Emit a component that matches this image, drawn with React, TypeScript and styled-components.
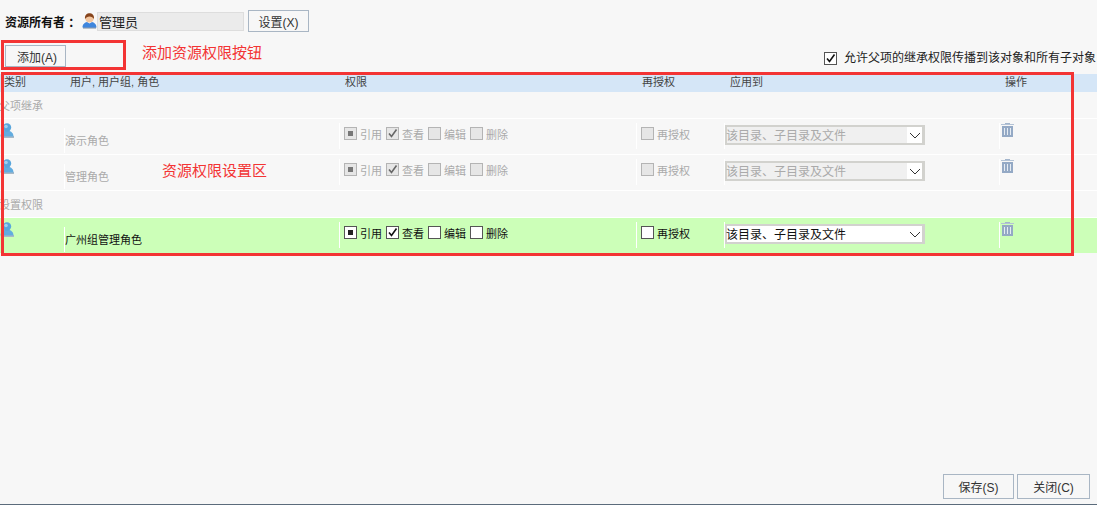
import React from 'react';
import styled, { createGlobalStyle } from 'styled-components';

const FONT = `"Liberation Sans", "Noto Sans CJK SC", sans-serif`;
const COLUMNS = '64px 275px 297px 88px 275px 1fr';

const GlobalStyle = createGlobalStyle`
  html, body {
    margin: 0;
    padding: 0;
    height: 100%;
    overflow: hidden;
    background: #f7f7f7;
  }
  #root {
    height: 100%;
  }
`;

const UserIcon = () => (
  <svg width="14" height="15" viewBox="0 0 14 15">
    <rect x="1" y="13" width="13" height="2" fill="#a9b9c6" />
    <path d="M0.5 13.5 C0.5 10 3 8.5 4.5 8 H9.5 C11 8.5 13.5 10 13.5 13.5 Z" fill="#62acdf" />
    <circle cx="7" cy="4.5" r="4.2" fill="#59a6dc" />
    <circle cx="6" cy="3.5" r="1.8" fill="#9ed0f0" />
  </svg>
);

const OwnerIcon = () => (
  <svg width="15" height="16" viewBox="0 0 15 16">
    <rect x="1" y="14" width="13" height="1.6" fill="#8e9cae" />
    <path d="M0.5 14.5 C0.5 11 3 9.5 5 9 L7.5 10.5 L10 9 C12 9.5 14.5 11 14.5 14.5 Z" fill="#3f86dd" />
    <circle cx="7.5" cy="5.2" r="4.3" fill="#f2c6a0" />
    <path d="M3 6 C2.5 1.5 5.5 0.3 7.5 0.3 C9.5 0.3 12.5 1.5 12 6 C11 4.2 9.5 3.4 7.5 3.4 C5.5 3.4 4 4.2 3 6 Z" fill="#86441c" />
  </svg>
);

const TrashIcon = () => (
  <svg width="13" height="14" viewBox="0 0 13 14">
    <rect x="4" y="0" width="5" height="1" fill="#a3b5cc" />
    <rect x="0" y="1" width="13" height="1" fill="#b4c3d6" />
    <rect x="1" y="3" width="11" height="11" fill="#94a9c5" />
    <rect x="3" y="5" width="1" height="7" fill="#e6ecf3" />
    <rect x="6" y="5" width="1" height="7" fill="#e6ecf3" />
    <rect x="9" y="5" width="1" height="7" fill="#e6ecf3" />
  </svg>
);

const Chevron = () => (
  <svg width="12" height="7" viewBox="0 0 12 7">
    <path d="M1 1 L6 6 L11 1" fill="none" stroke="#333" strokeWidth="1" />
  </svg>
);

const Page = styled.div`
  position: relative;
  height: 100%;
  box-sizing: border-box;
  display: flex;
  flex-direction: column;
  border-bottom: 1px solid #5b6b7b;
  font-family: ${FONT};
  font-size: 11px;
  color: #333;
`;

const OwnerBar = styled.div`
  display: flex;
  align-items: center;
  height: 22px;
  margin-top: 10px;
  padding-left: 5px;
`;

const OwnerLabel = styled.span`
  width: 77px;
  font-size: 12px;
  font-weight: bold;
  color: #111;
  white-space: pre;
`;

const OwnerField = styled.div`
  width: 147px;
  height: 19px;
  box-sizing: border-box;
  display: flex;
  align-items: center;
  margin: 0 4px 0 0;
  padding-left: 1px;
  background: #ebebeb;
  border: 1px solid #ddd;
  font-size: 13px;
  color: #222;
`;

const Button = styled.button<{ $width: number; $height?: number; $shift?: number }>`
  width: ${(p) => p.$width}px;
  height: ${(p) => p.$height ?? 22}px;
  box-sizing: border-box;
  padding: 0 0 0 ${(p) => p.$shift ?? 0}px;
  background: #f7f7f7;
  border: 1px solid #a9b6c4;
  font-family: ${FONT};
  font-size: 12px;
  color: #333;
`;

const ToolBar = styled.div`
  display: flex;
  align-items: flex-start;
  justify-content: space-between;
  height: 27px;
  margin-top: 13px;
  padding: 0 1px 0 5px;
`;

const InheritOption = styled.label`
  display: flex;
  align-items: center;
  gap: 7px;
  margin-top: 6px;
  font-size: 12px;
  line-height: 14px;
  color: #222;
  white-space: nowrap;
`;

const Header = styled.div`
  display: grid;
  grid-template-columns: ${COLUMNS};
  height: 18px;
  box-sizing: border-box;
  margin-top: 2px;
  padding-top: 2px;
  background: #d5e6f7;
  line-height: 12px;
  color: #444;
`;

const HeaderCell = styled.div<{ $pad: number }>`
  padding-left: ${(p) => p.$pad}px;
  white-space: nowrap;
`;

const GroupRow = styled.div`
  height: 27px;
  box-sizing: border-box;
  padding-top: 7px;
  margin-left: -1px;
  border-bottom: 1px solid #fff;
  color: #aaa;
  line-height: 14px;
`;

const Row = styled.div<{ $active?: boolean }>`
  display: grid;
  grid-template-columns: ${COLUMNS};
  height: ${(p) => (p.$active ? 35 : 36)}px;
  box-sizing: border-box;
  border-bottom: ${(p) => (p.$active ? 'none' : '1px solid #fff')};
  background: ${(p) => (p.$active ? '#ccffb8' : 'transparent')};
  color: ${(p) => (p.$active ? '#111' : '#aaa')};
`;

const IconCell = styled.div`
  padding-top: 4px;
`;

const NameCell = styled.div`
  height: 25px;
  box-sizing: border-box;
  margin-top: 9px;
  padding: 6px 0 0 0;
  border-left: 1px solid #fff;
  line-height: 14px;
  white-space: nowrap;
`;

const Cell = styled.div<{ $pad?: number }>`
  height: 26px;
  box-sizing: border-box;
  margin-top: 4px;
  padding-left: ${(p) => p.$pad ?? 4}px;
  border-left: 1px solid #fff;
  display: flex;
  align-items: flex-start;
`;

const Choice = styled.span`
  display: flex;
  align-items: center;
  height: 13px;
  margin: 4px 4px 0 0;
  gap: 3px;
  line-height: 15px;
  white-space: nowrap;
`;

const ChoiceText = styled.span`
  padding-top: 4px;
`;

const Box = styled.span<{ $enabled: boolean }>`
  width: 13px;
  height: 13px;
  box-sizing: border-box;
  display: inline-flex;
  align-items: center;
  justify-content: center;
  flex: none;
  border: 1px solid ${(p) => (p.$enabled ? '#555' : '#b4b4b4')};
  background: ${(p) => (p.$enabled ? '#fff' : '#e6e6e6')};
`;

const Square = styled.span<{ $enabled: boolean }>`
  width: 5px;
  height: 5px;
  background: ${(p) => (p.$enabled ? '#222' : '#777')};
`;

const Select = styled.div<{ $enabled: boolean }>`
  width: 200px;
  height: 20px;
  box-sizing: border-box;
  margin-top: 2px;
  border: 2px solid #d2d2ce;
  border-right-width: 3px;
  display: flex;
  align-items: center;
  justify-content: space-between;
  background: ${(p) => (p.$enabled ? '#fff' : '#f0f0f0')};
  font-size: 12px;
  color: ${(p) => (p.$enabled ? '#111' : '#aaa')};
  white-space: nowrap;
`;

const SelectText = styled.span`
  margin: -2px 0 0 -1px;
`;

const SelectArrow = styled.span`
  width: 15px;
  height: 100%;
  display: flex;
  align-items: center;
  justify-content: center;
  background: #fff;
`;

const ActionCell = styled.div`
  height: 26px;
  box-sizing: border-box;
  margin-top: 4px;
  padding-left: 1px;
  border-left: 1px solid #fff;
`;

const Footer = styled.div`
  display: flex;
  justify-content: flex-end;
  gap: 3px;
  margin-top: auto;
  padding: 0 7px 5px 0;
`;

const Highlight = styled.div<{ $x: number; $y: number; $w: number; $h: number }>`
  position: absolute;
  left: ${(p) => p.$x}px;
  top: ${(p) => p.$y}px;
  width: ${(p) => p.$w}px;
  height: ${(p) => p.$h}px;
  box-sizing: border-box;
  border: 3px solid #f33434;
  pointer-events: none;
`;

const Note = styled.span<{ $x: number; $y: number }>`
  position: absolute;
  left: ${(p) => p.$x}px;
  top: ${(p) => p.$y}px;
  font-size: 15px;
  line-height: 18px;
  color: #f33434;
  white-space: nowrap;
`;

type Perm = { label: string; mark?: 'check' | 'square' };

const PERMS: Perm[] = [
  { label: '引用', mark: 'square' },
  { label: '查看', mark: 'check' },
  { label: '编辑' },
  { label: '删除' },
];

const CheckBox: React.FC<{ enabled: boolean; mark?: 'check' | 'square' }> = ({ enabled, mark }) => (
  <Box $enabled={enabled}>
    {mark === 'square' && <Square $enabled={enabled} />}
    {mark === 'check' && (
      <svg width="11" height="11" viewBox="0 0 11 11">
        <path d="M2 5.5 L4.5 8.5 L9.5 1.5" fill="none" stroke={enabled ? '#111' : '#666'} strokeWidth="1.6" />
      </svg>
    )}
  </Box>
);

const PermissionRow: React.FC<{ name: string; active?: boolean }> = ({ name, active = false }) => (
  <Row $active={active}>
    <IconCell>
      <UserIcon />
    </IconCell>
    <NameCell>{name}</NameCell>
    <Cell>
      {PERMS.map((perm) => (
        <Choice key={perm.label}>
          <CheckBox enabled={active} mark={perm.mark} />
          <ChoiceText>{perm.label}</ChoiceText>
        </Choice>
      ))}
    </Cell>
    <Cell>
      <Choice>
        <CheckBox enabled={active} />
        <ChoiceText>再授权</ChoiceText>
      </Choice>
    </Cell>
    <Cell $pad={0}>
      <Select $enabled={active}>
        <SelectText>该目录、子目录及文件</SelectText>
        <SelectArrow>
          <Chevron />
        </SelectArrow>
      </Select>
    </Cell>
    <ActionCell>
      <TrashIcon />
    </ActionCell>
  </Row>
);

export default function App() {
  return (
    <Page>
      <GlobalStyle />
      <OwnerBar>
        <OwnerLabel>资源所有者 ：</OwnerLabel>
        <OwnerIcon />
        <OwnerField>管理员</OwnerField>
        <Button $width={61}>设置(X)</Button>
      </OwnerBar>
      <ToolBar>
        <Button $width={61} $shift={3}>添加(A)</Button>
        <InheritOption>
          <CheckBox enabled mark="check" />
          允许父项的继承权限传播到该对象和所有子对象
        </InheritOption>
      </ToolBar>
      <Header>
        <HeaderCell $pad={4}>类别</HeaderCell>
        <HeaderCell $pad={6}>用户, 用户组, 角色</HeaderCell>
        <HeaderCell $pad={6}>权限</HeaderCell>
        <HeaderCell $pad={6}>再授权</HeaderCell>
        <HeaderCell $pad={6}>应用到</HeaderCell>
        <HeaderCell $pad={6}>操作</HeaderCell>
      </Header>
      <GroupRow>父项继承</GroupRow>
      <PermissionRow name="演示角色" />
      <PermissionRow name="管理角色" />
      <GroupRow>设置权限</GroupRow>
      <PermissionRow name="广州组管理角色" active />
      <Footer>
        <Button $width={71} $height={25}>保存(S)</Button>
        <Button $width={73} $height={25}>关闭(C)</Button>
      </Footer>
      <Highlight $x={1} $y={40} $w={125} $h={30} />
      <Highlight $x={1} $y={72} $w={1073} $h={184} />
      <Note $x={142} $y={44}>添加资源权限按钮</Note>
      <Note $x={162} $y={162}>资源权限设置区</Note>
    </Page>
  );
}
